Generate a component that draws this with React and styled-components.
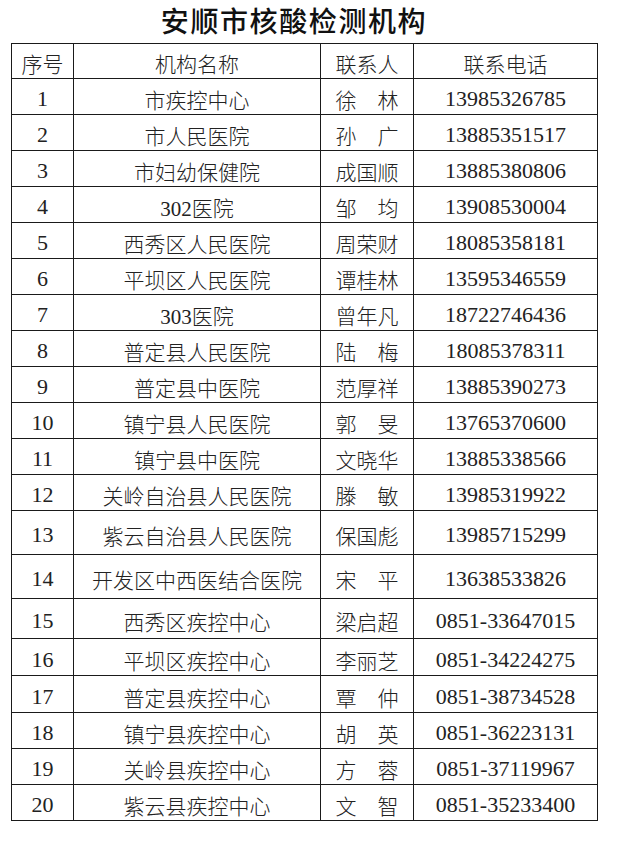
import React from 'react';
import styled, { createGlobalStyle } from 'styled-components';

const GlobalStyle = createGlobalStyle`
  html, body {
    margin: 0;
    padding: 0;
    background: #ffffff;
  }
`;

const Page = styled.div`
  width: 628px;
  height: 858px;
  background: #ffffff;
  box-sizing: border-box;
  padding: 0 0 0 11px;
`;

const Title = styled.div`
  width: 587px;
  height: 43px;
  box-sizing: border-box;
  padding: 0 21px 4px 0;
  display: flex;
  align-items: center;
  justify-content: center;
  font-family: "Noto Sans CJK SC", sans-serif;
  font-size: 28px;
  font-weight: 500;
  letter-spacing: 1.6px;
  color: #111111;
`;

const Table = styled.div`
  width: 587px;
  box-sizing: border-box;
  display: flex;
  flex-direction: column;
  gap: 1px;
  padding: 1px;
  background: #1a1a1a;
`;

const Row = styled.div`
  display: grid;
  grid-template-columns: 61px 246px 92px 183px;
  gap: 1px;
  height: ${props => props.h}px;
`;

const Cell = styled.div`
  background: #ffffff;
  display: flex;
  align-items: center;
  justify-content: center;
  box-sizing: border-box;
  padding-top: ${props => props.head ? 3 : 5}px;
  font-family: "Liberation Serif", "Noto Sans CJK SC", serif;
  font-size: ${props => props.num ? 22 : 21}px;
  font-weight: 300;
  color: #222222;
  white-space: nowrap;
`;

const rows = [
  ['1', '市疾控中心', '徐　林', '13985326785', 35],
  ['2', '市人民医院', '孙　广', '13885351517', 35],
  ['3', '市妇幼保健院', '成国顺', '13885380806', 35],
  ['4', '302医院', '邹　均', '13908530004', 35],
  ['5', '西秀区人民医院', '周荣财', '18085358181', 35],
  ['6', '平坝区人民医院', '谭桂林', '13595346559', 35],
  ['7', '303医院', '曾年凡', '18722746436', 35],
  ['8', '普定县人民医院', '陆　梅', '18085378311', 35],
  ['9', '普定县中医院', '范厚祥', '13885390273', 35],
  ['10', '镇宁县人民医院', '郭　旻', '13765370600', 35],
  ['11', '镇宁县中医院', '文晓华', '13885338566', 35],
  ['12', '关岭自治县人民医院', '滕　敏', '13985319922', 35],
  ['13', '紫云自治县人民医院', '保国彪', '13985715299', 43],
  ['14', '开发区中西医结合医院', '宋　平', '13638533826', 43],
  ['15', '西秀区疾控中心', '梁启超', '0851-33647015', 39],
  ['16', '平坝区疾控中心', '李丽芝', '0851-34224275', 36],
  ['17', '普定县疾控中心', '覃　仲', '0851-38734528', 36],
  ['18', '镇宁县疾控中心', '胡　英', '0851-36223131', 35],
  ['19', '关岭县疾控中心', '方　蓉', '0851-37119967', 35],
  ['20', '紫云县疾控中心', '文　智', '0851-35233400', 35],
];

export default function App() {
  return (
    <React.Fragment>
      <GlobalStyle />
      <Page>
        <Title>安顺市核酸检测机构</Title>
        <Table>
          <Row h={34}>
            <Cell head>序号</Cell>
            <Cell head>机构名称</Cell>
            <Cell head>联系人</Cell>
            <Cell head>联系电话</Cell>
          </Row>
          {rows.map(([no, name, person, phone, h]) => (
            <Row key={no} h={h}>
              <Cell num>{no}</Cell>
              <Cell>{name}</Cell>
              <Cell>{person}</Cell>
              <Cell num>{phone}</Cell>
            </Row>
          ))}
        </Table>
      </Page>
    </React.Fragment>
  );
}
